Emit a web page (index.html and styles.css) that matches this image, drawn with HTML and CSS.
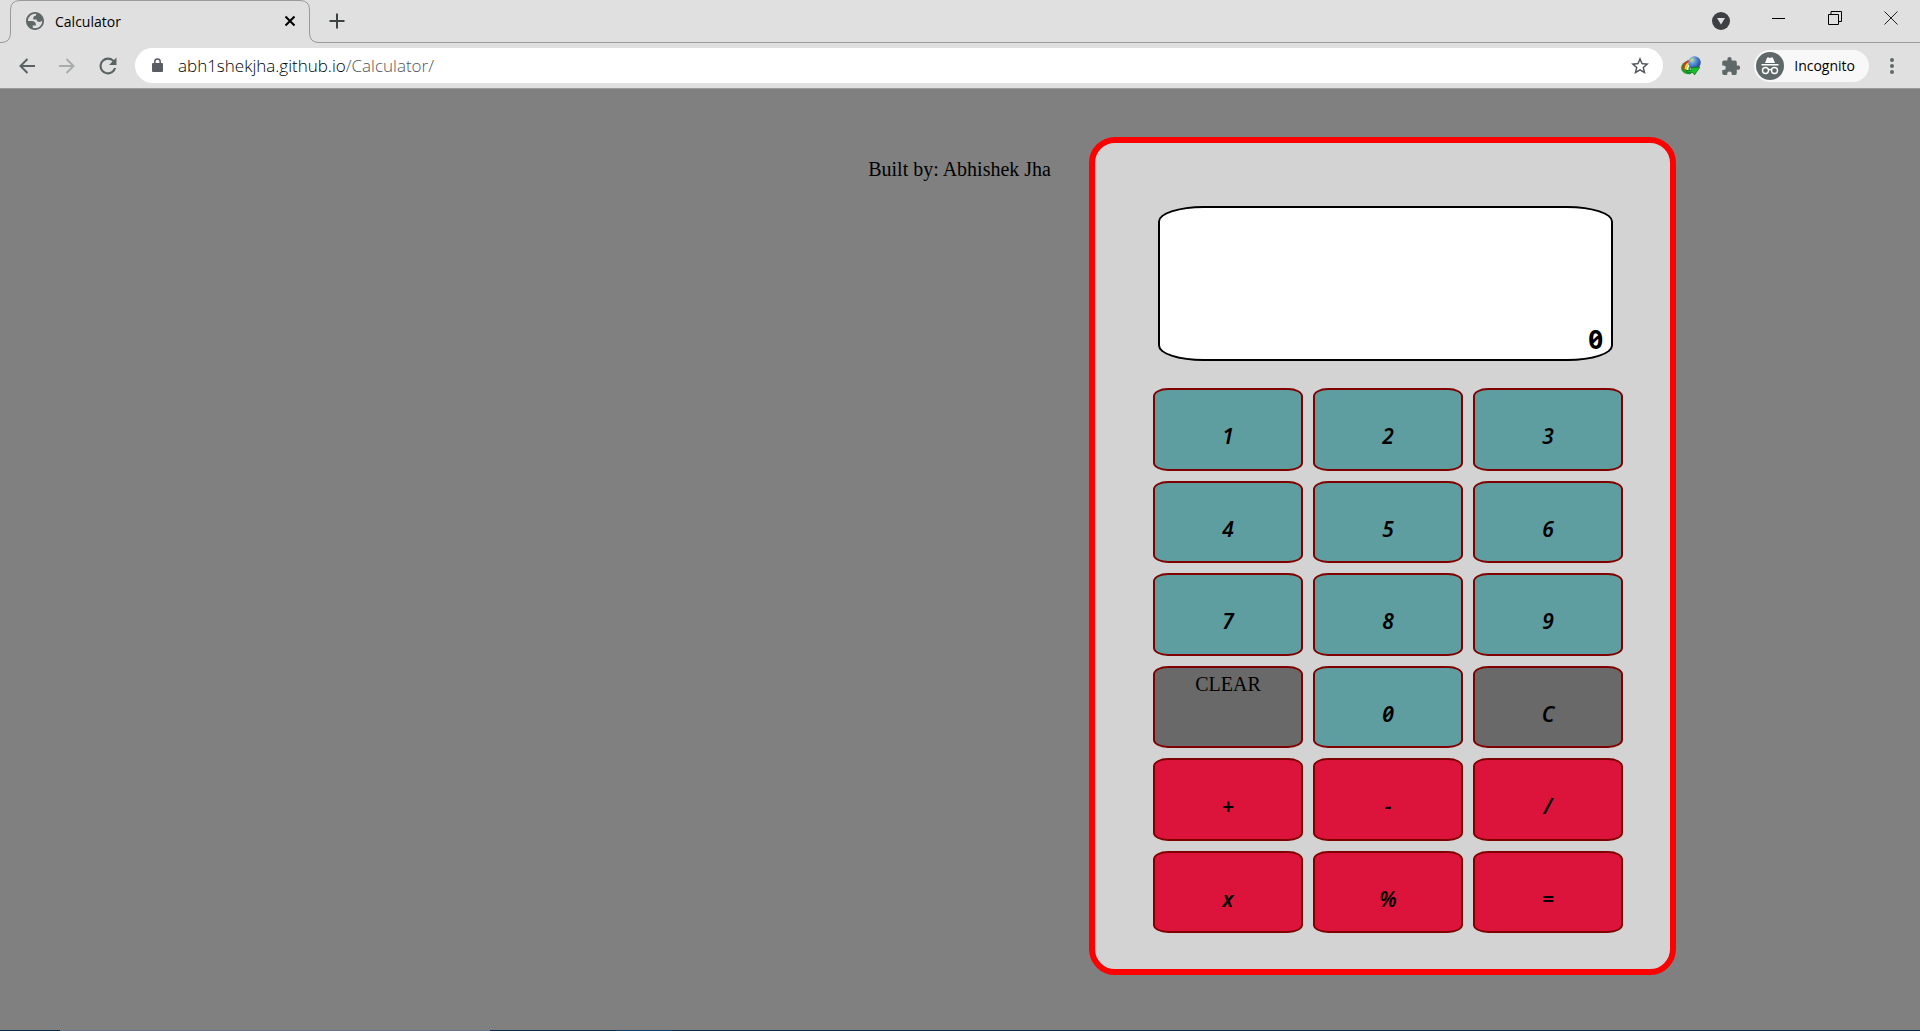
FILE: index.html
```html
<!DOCTYPE html>
<html lang="en">
<head>
<meta charset="utf-8">
<title>Calculator</title>
<link rel="stylesheet" href="styles.css">
</head>
<body>
<header class="browser">
  <div class="tabstrip">
    <div class="tab">
      <svg class="tab-outline" width="320" height="43" viewBox="0 0 320 43" aria-hidden="true"><path d="M0 42.500H1Q10.500 42.500 10.500 33V10Q10.500 .5 20 .5H300Q309.500 .5 309.500 10V33Q309.500 42.500 319 42.500H320V43H0Z" fill="#e0e0e0"/><path d="M0 42.500H1Q10.500 42.500 10.500 33V10Q10.500 .5 20 .5H300Q309.500 .5 309.500 10V33Q309.500 42.500 319 42.500H320" fill="none" stroke="#9a9a9a"/></svg>
      <svg class="icon" width="18" height="18" viewBox="2 2 20 20" fill="#5f6868" fill-rule="evenodd"><path d="M12 2C6.480 2 2 6.480 2 12s4.480 10 10 10 10-4.480 10-10S17.520 2 12 2zM4 12h4.400c3.407.022 4.922 1.730 4.543 5.127H9.488v2.470a8.004 8.004 0 0 0 10.498-8.083C19.327 12.504 18.332 13 17 13c-2.137 0-3.206-.916-3.206-2.750h-3.748c-.274-2.728.683-4.092 2.870-4.092 0-.975.327-1.597.811-1.970A8.004 8.004 0 0 0 4 12z"/></svg>
      <span class="tab-title">Calculator</span>
      <button class="icon-button" aria-label="Close tab"><svg width="12" height="12" viewBox="0 0 12 12" stroke="#000" stroke-width="2"><path d="M1.500 1.500l9 9M10.500 1.500l-9 9"/></svg></button>
    </div>
    <button class="icon-button new-tab" aria-label="New tab"><svg width="16" height="16" viewBox="0 0 16 16" stroke="#3c4444" stroke-width="2"><path d="M8 .5v15M.5 8h15"/></svg></button>
    <div class="window-controls">
      <button class="icon-button" aria-label="Search tabs"><svg width="18" height="24" viewBox="0 0 18 24"><circle cx="9" cy="15" r="9" fill="#3c4043"/><path d="M5 12h8l-4 6.500z" fill="#e0e0e0"/></svg></button>
      <button class="icon-button" aria-label="Minimize"><svg width="14" height="14" viewBox="0 0 14 14"><path d="M0 7.500h13" stroke="#000"/></svg></button>
      <button class="icon-button" aria-label="Restore"><svg width="14" height="14" viewBox="0 0 14 14" fill="none" stroke="#000"><path d="M.5 3.500h10v10H.5zM3 3V.5h10.500v10H11"/></svg></button>
      <button class="icon-button" aria-label="Close"><svg width="14" height="14" viewBox="0 0 14 14" stroke="#222"><path d="M.5 .5l13 13M13.500 .5l-13 13"/></svg></button>
    </div>
  </div>
  <div class="toolbar">
    <nav class="history">
      <button class="icon-button" aria-label="Back"><svg width="16" height="16" viewBox="0 0 16 16" fill="none" stroke="#5a6363" stroke-width="2"><path d="M16 8H1.500M8.500 1L1.500 8l7 7"/></svg></button>
      <button class="icon-button" aria-label="Forward"><svg width="16" height="16" viewBox="0 0 16 16" fill="none" stroke="#a8acac" stroke-width="2"><path d="M0 8h14.500M7.500 1l7 7-7 7"/></svg></button>
      <button class="icon-button" aria-label="Reload"><svg width="18" height="18" viewBox="3.500 3.500 17 17" fill="#5a6363"><path d="M17.650 6.350A7.958 7.958 0 0 0 12 4a8 8 0 1 0 7.730 10h-2.080A6 6 0 1 1 12 6c1.660 0 3.140.69 4.220 1.780L13 11h7V4z"/></svg></button>
    </nav>
    <div class="omnibox">
      <svg width="11" height="15" viewBox="0 0 11 15"><rect y="5" width="11" height="9" rx="1" fill="#5a5e63"/><path d="M2.800 5.500V3.700a2.700 2.700 0 0 1 5.400 0v1.800" fill="none" stroke="#5a5e63" stroke-width="1.500"/></svg>
      <div class="url">abh1shekjha.github.io<span class="path">/Calculator/</span></div>
      <button class="icon-button" aria-label="Bookmark"><svg width="18" height="18" viewBox="2 2 20 20" fill="#50555a"><path d="M22 9.240l-7.190-.62L12 2 9.190 8.630 2 9.240l5.460 4.730L5.820 21 12 17.270 18.180 21l-1.630-7.030zM12 15.400l-3.760 2.270 1-4.280-3.320-2.880 4.380-.38L12 6.100l1.710 4.040 4.380.38-3.320 2.880 1 4.280z"/></svg></button>
    </div>
    <div class="extensions">
      <button class="icon-button" aria-label="Download manager"><svg width="20" height="20" viewBox="0 0 20 20"><defs><radialGradient id="globe" cx=".3" cy=".3" r=".8"><stop offset="0" stop-color="#d8e27a"/><stop offset=".35" stop-color="#5f9be0"/><stop offset="1" stop-color="#1a3f96"/></radialGradient></defs><path d="M8 4C2 6-1 10 .5 14c2 4 6 5 9.500 4z" fill="#1a9c30"/><path d="M8 5C4 7 1.500 10 3 14" fill="none" stroke="#e03020" stroke-width="2"/><path d="M9 6.500C6 8 4 11 5 14.500" fill="none" stroke="#ffd82a" stroke-width="2"/><path d="M9.500 8C7 10 6 12 7 14" fill="none" stroke="#fff" stroke-width="1.500"/><circle cx="13.500" cy="6.500" r="6.200" fill="url(#globe)"/><path d="M4 13.500c2 1.500 5 1.500 7 .5l-1.500-2.500 9.500-.5-5.500 8-1.500-2.500c-3 1-6 0-8-3z" fill="#17c02b" stroke="#0b5317" stroke-width=".6"/></svg></button>
      <button class="icon-button" aria-label="Extensions"><svg width="18" height="18" viewBox="2 1 20.500 21" fill="#5f6868"><path d="M20.500 11H19V7a2 2 0 0 0-2-2h-4V3.500a2.500 2.500 0 0 0-5 0V5H4a2 2 0 0 0-2 2v3.800h1.500a2.700 2.700 0 0 1 0 5.400H2V20a2 2 0 0 0 2 2h3.800v-1.500a2.700 2.700 0 0 1 5.400 0V22H17a2 2 0 0 0 2-2v-4h1.500a2.500 2.500 0 0 0 0-5z"/></svg></button>
    </div>
    <button class="incognito"><svg width="28" height="28" viewBox="0 0 28 28"><circle cx="14" cy="14" r="14" fill="#5f6868"/><path d="M9 11l2-5q.5-1 1.500-.6l1.500.5 1.500-.5q1-.4 1.500.6l2 5zM5.500 12h17v1.500h-17z" fill="#fff"/><g fill="none" stroke="#fff" stroke-width="1.400"><circle cx="9.500" cy="18.500" r="3"/><circle cx="18.500" cy="18.500" r="3"/><path d="M12.500 18q1.500-1 3 0"/></g></svg>Incognito</button>
    <button class="icon-button" aria-label="Menu"><svg width="4" height="18" viewBox="0 0 4 18" fill="#5f6868"><circle cx="2" cy="3" r="2"/><circle cx="2" cy="9" r="2"/><circle cx="2" cy="15" r="2"/></svg></button>
  </div>
</header>
<main class="page">
  <p class="credit">Built by: Abhishek Jha</p>
  <section class="calculator">
    <input class="display" type="text" value="0" aria-label="Result" readonly>
    <div class="keypad">
      <button class="key">1</button>
      <button class="key">2</button>
      <button class="key">3</button>
      <button class="key">4</button>
      <button class="key">5</button>
      <button class="key">6</button>
      <button class="key">7</button>
      <button class="key">8</button>
      <button class="key">9</button>
      <button class="key key-edit key-clear">CLEAR</button>
      <button class="key">0</button>
      <button class="key key-edit">C</button>
      <button class="key key-operator">+</button>
      <button class="key key-operator">-</button>
      <button class="key key-operator">/</button>
      <button class="key key-operator">x</button>
      <button class="key key-operator">%</button>
      <button class="key key-operator">=</button>
    </div>
  </section>
</main>
<div class="taskbar-edge"></div>
</body>
</html>
```
FILE: styles.css
```css
* {
  box-sizing: border-box;
}

body {
  display: flex;
  flex-direction: column;
  min-height: 100vh;
  margin: 0;
  background: #808080;
  color: #000;
  font-family: "Liberation Serif", "Times New Roman", serif;
  font-size: 20px;
}

button {
  padding: 0;
  border: 0;
  background: none;
  color: inherit;
  font: inherit;
}

svg {
  display: block;
  flex: none;
}

/* Browser frame */
.browser {
  border-bottom: 1px solid #9a9a9a;
  background: #e0e0e0;
  font-family: "Open Sans", "Noto Sans", sans-serif;
  font-size: 14px;
}

.tabstrip {
  display: flex;
  align-items: center;
  height: 43px;
  border-bottom: 1px solid #9a9a9a;
}

.tab {
  position: relative;
  display: flex;
  align-items: center;
  gap: 11px;
  width: 320px;
  height: 43px;
  padding: 0 24px 0 26px;
}

.tab > * {
  position: relative;
}

.tab .tab-outline {
  position: absolute;
  top: 0;
  left: 0;
}

.tab-title {
  flex: 1;
}

.new-tab {
  margin-left: 9px;
}

.window-controls {
  display: flex;
  align-items: center;
  gap: 42px;
  height: 36px;
  margin-left: auto;
  margin-bottom: 6px;
  padding-right: 22px;
}

.toolbar {
  display: flex;
  align-items: center;
  height: 45px;
  padding-right: 26px;
}

.history {
  display: flex;
  align-items: center;
  gap: 24px;
  padding: 0 18px 0 19px;
}

.omnibox {
  display: flex;
  flex: 1;
  align-items: center;
  gap: 15px;
  height: 35px;
  padding: 0 14px 0 17px;
  border-radius: 18px;
  background: #fff;
}

.url {
  flex: 1;
  font-size: 17px;
  font-weight: 300;
}

.path {
  color: #50555a;
}

.extensions {
  display: flex;
  align-items: center;
  gap: 21px;
  margin: 0 14px 0 18px;
}

.incognito {
  display: flex;
  align-items: center;
  gap: 10px;
  height: 32px;
  margin-right: 21px;
  padding: 0 14px 0 2px;
  border-radius: 16px;
  background: #f8f8f8;
}

/* Calculator page */
.page {
  display: flex;
  flex: 1;
  align-items: flex-start;
  justify-content: flex-end;
  gap: 38px;
  padding: 48px 244px 48px 24px;
}

.credit {
  margin: 21px 0 0;
}

.calculator {
  width: 587px;
  padding: 63px 47px 36px 58px;
  border: 6px solid #f00;
  border-radius: 26px;
  background: #d3d3d3;
}

.display {
  display: block;
  width: calc(100% - 15px);
  height: 155px;
  margin: 0 10px 27px 5px;
  padding: 110px 8px 0;
  border: 2px solid #000;
  border-radius: 10%;
  background: #fff;
  color: #000;
  font-family: "Noto Sans", sans-serif;
  font-size: 26px;
  font-weight: 700;
  font-variant-numeric: slashed-zero;
  text-align: right;
}

.keypad {
  display: grid;
  grid-template-columns: repeat(3, 1fr);
  grid-auto-rows: 1fr;
  gap: 10px;
  height: 545px;
}

.key {
  display: flex;
  align-items: center;
  justify-content: center;
  padding-top: 14px;
  border: 2px solid #800000;
  border-radius: 10%;
  background: #5f9ea0;
  font-family: "Noto Sans", sans-serif;
  font-size: 21px;
  font-style: italic;
  font-weight: 600;
  font-variant-numeric: slashed-zero;
}

.key-edit {
  background: #696969;
}

.key-operator {
  background: #dc143c;
}

.key-clear {
  align-items: flex-start;
  padding-top: 5px;
  font-family: "Liberation Serif", "Times New Roman", serif;
  font-size: 20px;
  font-style: normal;
  font-weight: 400;
}

.taskbar-edge {
  height: 1px;
  background: linear-gradient(90deg, #0a2c46 60px, #64788c 60px 490px, #0a2c46 490px 616px, #10406a 616px 672px, #0a2c46 672px);
}
```
